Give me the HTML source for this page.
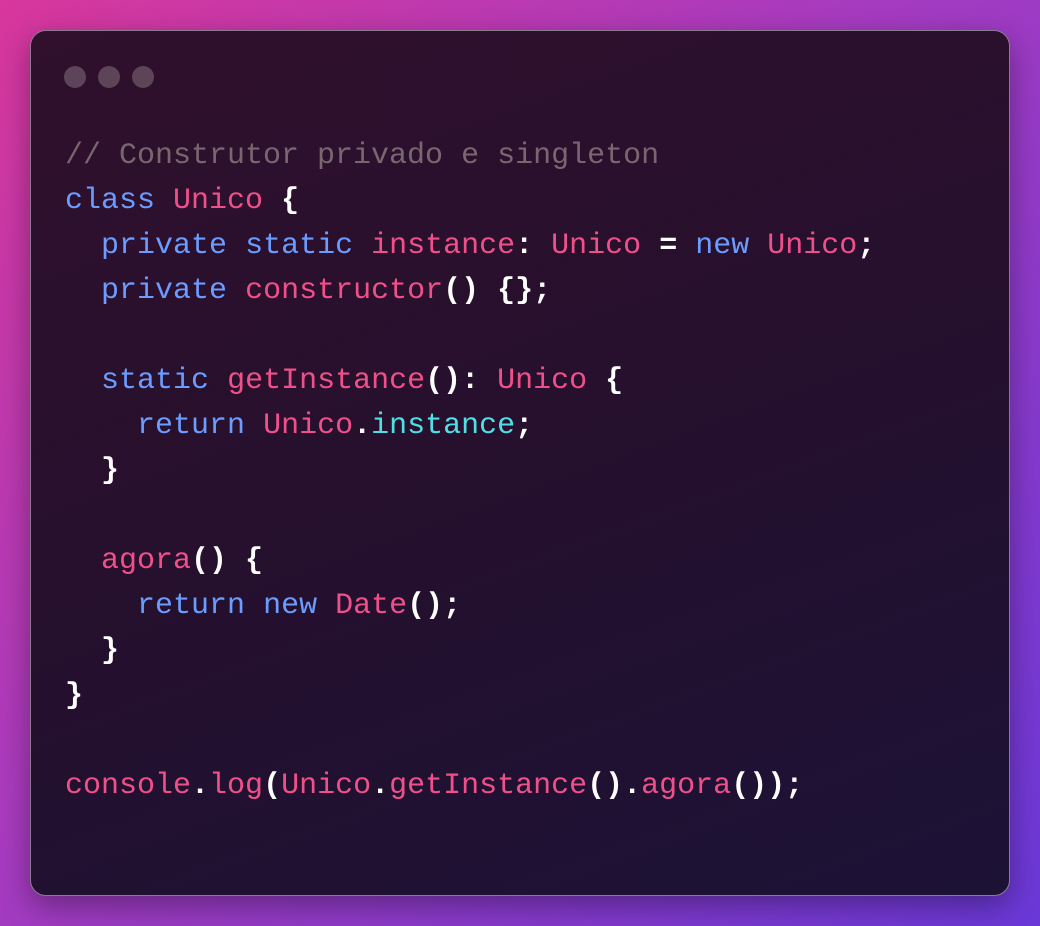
<!DOCTYPE html>
<html><head><style>
html,body{margin:0;padding:0}
body{width:1040px;height:926px;overflow:hidden;background:linear-gradient(135deg,#d8379c 0%,#a53bc0 45%,#6a38d8 100%);position:relative}
.win{position:absolute;left:30px;top:30px;width:978px;height:864px;border-radius:16px;border:1px solid #8a7a8e;background:linear-gradient(160deg,#30102c 0%,#24102e 55%,#1c1236 100%);box-shadow:0 10px 30px rgba(0,0,0,.35)}
.dot{position:absolute;top:35px;width:22px;height:22px;border-radius:50%;background:#5e4458}
pre{position:absolute;left:34px;top:103px;margin:0;font-family:"Liberation Mono",monospace;font-size:30px;line-height:45px;color:#fff}
.c{color:#7a666f}.k{color:#6b9cff}.p{color:#f0508a}.y{color:#4fe0e6}.w{color:#fff;font-weight:bold}
</style></head><body>
<div class="win">
<div class="dot" style="left:33px"></div><div class="dot" style="left:67px"></div><div class="dot" style="left:101px"></div>
<pre><span class="c">// Construtor privado e singleton</span>
<span class="k">class</span> <span class="p">Unico</span> <span class="w">{</span>
  <span class="k">private</span> <span class="k">static</span> <span class="p">instance</span><span class="w">:</span> <span class="p">Unico</span> <span class="w">=</span> <span class="k">new</span> <span class="p">Unico</span><span class="w">;</span>
  <span class="k">private</span> <span class="p">constructor</span><span class="w">() {};</span>

  <span class="k">static</span> <span class="p">getInstance</span><span class="w">():</span> <span class="p">Unico</span> <span class="w">{</span>
    <span class="k">return</span> <span class="p">Unico</span><span class="w">.</span><span class="y">instance</span><span class="w">;</span>
  <span class="w">}</span>

  <span class="p">agora</span><span class="w">() {</span>
    <span class="k">return</span> <span class="k">new</span> <span class="p">Date</span><span class="w">();</span>
  <span class="w">}</span>
<span class="w">}</span>

<span class="p">console</span><span class="w">.</span><span class="p">log</span><span class="w">(</span><span class="p">Unico</span><span class="w">.</span><span class="p">getInstance</span><span class="w">().</span><span class="p">agora</span><span class="w">());</span></pre>
</div>
</body></html>
